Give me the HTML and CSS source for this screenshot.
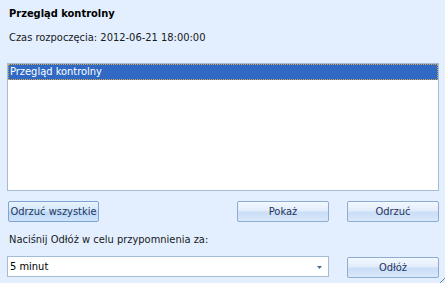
FILE: index.html
```html
<!DOCTYPE html>
<html lang="pl">
<head>
  <meta charset="UTF-8">
  <title>Przypomnienie</title>
  <link rel="stylesheet" href="styles.css">
</head>
<body>
  <!-- okno przypomnienia -->
  <div class="dialog">
    <h1 class="title">Przegląd kontrolny</h1>
    <p class="start">Czas rozpoczęcia: 2012-06-21 18:00:00</p>

    <div class="list">
      <div class="item selected">Przegląd kontrolny</div>
    </div>

    <div class="actions">
      <button class="btn btn-wide focused">Odrzuć wszystkie</button>
      <div class="spacer"></div>
      <button class="btn">Pokaż</button>
      <button class="btn">Odrzuć</button>
    </div>

    <p class="hint">Naciśnij Odłóż w celu przypomnienia za:</p>

    <div class="snooze">
      <div class="combo">
        <span>5 minut</span>
        <svg class="arrow" width="5" height="3" viewBox="0 0 5 3"><path d="M0 0H5L2.5 3Z" fill="#4d6d9c"/></svg>
      </div>
      <button class="btn">Odłóż</button>
    </div>
  </div>

  <svg class="grip" width="5" height="5" viewBox="0 0 5 5">
    <rect x="4" y="0" width="1" height="1" fill="#6b87ad"/>
    <rect x="3" y="1" width="1" height="1" fill="#6b87ad"/>
    <rect x="2" y="2" width="1" height="1" fill="#6b87ad"/>
    <rect x="1" y="3" width="1" height="1" fill="#6b87ad"/>
    <rect x="0" y="4" width="1" height="1" fill="#6b87ad"/>
  </svg>
</body>
</html>
```

FILE: styles.css
```css
* { box-sizing: border-box; margin: 0; padding: 0; }
body {
  width: 445px;
  height: 283px;
  background: #e3effe;
  font-family: 'DejaVu Sans Condensed', 'DejaVu Sans', sans-serif;
  font-size: 11px;
  color: #17191d;
  overflow: hidden;
  position: relative;
}
.dialog {
  padding: 7px 6px 0 7px;
}
.title {
  font-size: 11px;
  font-weight: bold;
  line-height: 13px;
  padding-left: 2px;
  color: #000;
}
.start {
  line-height: 13px;
  margin-top: 11px;
  padding-left: 2px;
}
.list {
  margin-top: 19px;
  height: 128px;
  background: #fff;
  border: 1px solid #a5bcd9;
}
.item {
  height: 16px;
  line-height: 14px;
  padding-left: 1px;
  color: #fff;
}
.item.selected {
  background: #316ac5;
  border: 1px dotted #d8a448;
}
.actions {
  display: flex;
  align-items: center;
  margin-top: 10px;
}
.spacer { flex: 1; }
.btn {
  width: 92px;
  height: 21px;
  font-family: inherit;
  font-size: 11px;
  color: #1d3460;
  border: 1px solid #8eabd2;
  border-radius: 2px;
  background: linear-gradient(#f3f8fe 0%, #e2edfb 45%, #cadef6 55%, #d9e8fb 100%);
  cursor: pointer;
}
.btn + .btn { margin-left: 18px; }
.btn-wide {
  width: 91px;
  margin-left: 1px;
}
.btn.focused {
  border-color: #7fa3d3;
  background: linear-gradient(#e8f3fe 0%, #d5e8fc 45%, #bcd8f7 55%, #cfe4fb 100%);
}
.hint {
  line-height: 13px;
  margin-top: 11px;
  padding-left: 2px;
}
.snooze {
  display: flex;
  align-items: flex-start;
  margin-top: 10px;
}
.combo {
  width: 322px;
  height: 21px;
  margin-right: 18px;
  background: #fff;
  border: 1px solid #a5bcd9;
  display: flex;
  align-items: center;
  justify-content: space-between;
  padding: 0 6px 0 2px;
  color: #000;
}
.snooze .btn { margin-top: 1px; }
.arrow { margin-top: 1px; }
.grip {
  position: absolute;
  right: 0;
  bottom: 0;
}
```
